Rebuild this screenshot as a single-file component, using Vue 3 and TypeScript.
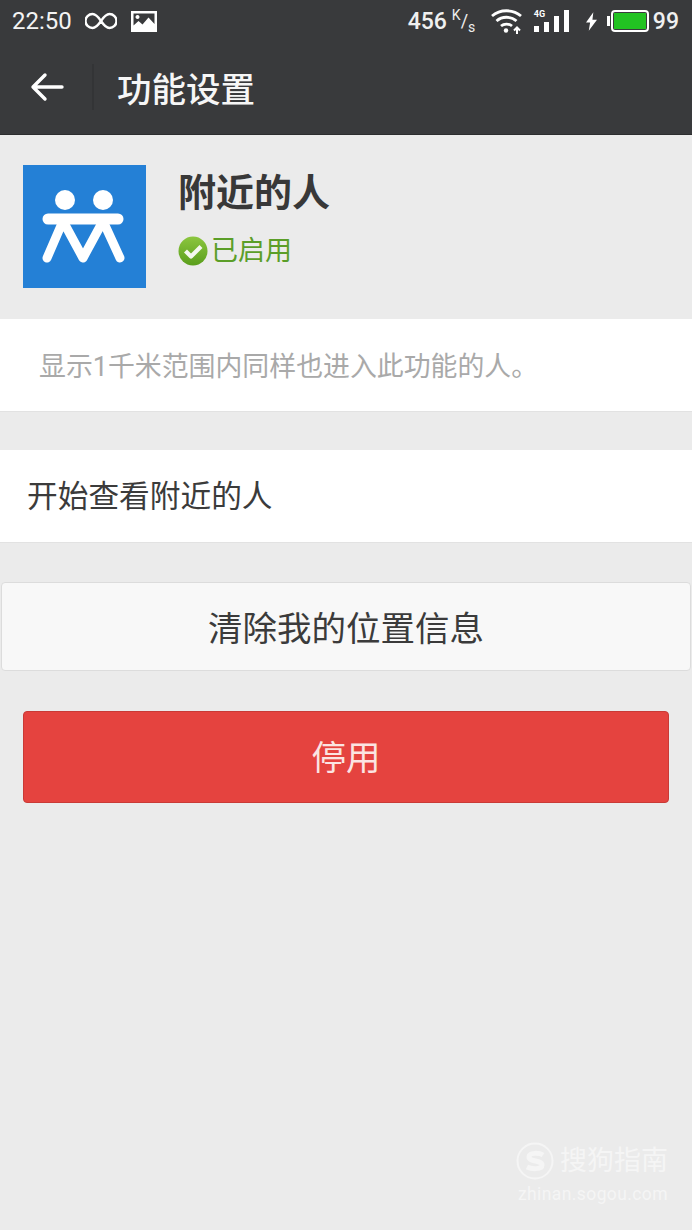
<script setup lang="ts">
const title = '功能设置'
</script>

<template>
  <div class="screen">
    <header class="head">
      <div class="status">
        <div class="status-left">
          <span class="time">22:50</span>
          <svg class="inf" width="32" height="18" viewBox="0 0 32 18" fill="none" stroke="#fff" stroke-width="2.400">
            <path d="M16 9c-3-4.500-5-7-8.500-7a7 7 0 0 0 0 14c3.500 0 5.500-2.500 8.500-7s5-7 8.500-7a7 7 0 0 1 0 14c-3.500 0-5.500-2.500-8.500-7z" />
          </svg>
          <svg class="pic" width="26" height="21" viewBox="0 0 26 21">
            <path fill="#fff" fill-rule="evenodd" d="M0 0h26v21H0zM2.500 2.500v12l5-4.500 4 3.500 6-7 6 6.500V2.500zM6.500 4a2 2 0 1 0 .01 0z" />
          </svg>
        </div>
        <div class="status-right">
          <span class="speed">456</span>
          <span class="unit"><sup>K</sup>/<sub>s</sub></span>
          <svg class="wifi" width="31" height="26" viewBox="0 0 31 26" fill="none" stroke="#fff" stroke-width="2.800">
            <path d="M1 8c8-7 21-7 29 0M5.500 13c5.500-5 14.500-5 20 0M10 18c3-2.600 8-2.600 11 0" />
            <circle cx="15" cy="22.500" r="2.200" fill="#fff" stroke="none" />
            <path d="M26 26v-6M23 22.500l3-3 3 3" stroke-width="2" />
          </svg>
          <div class="signal">
            <span class="four-g">4G</span>
            <i class="b1"></i><i class="b2"></i><i class="b3"></i><i class="b4"></i>
          </div>
          <svg class="bolt" width="11" height="19" viewBox="0 0 12 20">
            <path fill="#fff" d="M8 0 0 11h4.500L3 20l9-12H7z" />
          </svg>
          <div class="battery"><span class="level"></span></div>
          <span class="pct">99</span>
        </div>
      </div>
      <div class="toolbar">
        <svg class="back" width="34" height="30" viewBox="0 0 34 30" fill="none" stroke="#fff" stroke-width="3.400" stroke-linecap="round" stroke-linejoin="round">
          <path d="M32 15H3M15 3 3 15l12 12" />
        </svg>
        <span class="divider"></span>
        <h1 class="title">{{ title }}</h1>
      </div>
    </header>

    <section class="info">
      <div class="logo">
        <svg width="123" height="123" viewBox="0 0 123 123">
          <circle cx="42" cy="35" r="10" fill="#fff" />
          <circle cx="80" cy="35" r="10" fill="#fff" />
          <g fill="none" stroke="#fff" stroke-linecap="round" stroke-linejoin="round">
            <path d="M25 54h70" stroke-width="11" />
            <path d="M40 56 24 93M40 56l20 37 20-37M80 56l17 37" stroke-width="9" />
          </g>
        </svg>
      </div>
      <div class="info-text">
        <h2 class="name">附近的人</h2>
        <div class="state">
          <svg width="30" height="30" viewBox="0 0 30 30">
            <defs>
              <linearGradient id="ok" x1="0" y1="0" x2="0" y2="1">
                <stop offset="0" stop-color="#8cc63f" />
                <stop offset="1" stop-color="#5a9e1c" />
              </linearGradient>
            </defs>
            <circle cx="15" cy="15" r="14.500" fill="url(#ok)" />
            <path d="M7.500 15l5.500 5.500 10-10" fill="none" stroke="#f4f8ee" stroke-width="4.200" stroke-linejoin="round" />
          </svg>
          <span>已启用</span>
        </div>
      </div>
    </section>

    <div class="desc">显示1千米范围内同样也进入此功能的人。</div>
    <div class="row">开始查看附近的人</div>
    <button type="button" class="btn-clear">清除我的位置信息</button>
    <button type="button" class="btn-stop">停用</button>

    <div class="mark">
      <div class="mark-top">
        <svg width="38" height="38" viewBox="0 0 38 38" fill="none" stroke="#f5f5f5">
          <circle cx="19" cy="19" r="17.500" stroke-width="2" />
          <path d="M27 13c-3-2-14-3-14 2s13 3 13 8-11 4-15 2" stroke-width="5" />
        </svg>
        <span class="mark-name">搜狗指南</span>
      </div>
      <div class="mark-url">zhinan.sogou.com</div>
    </div>
  </div>
</template>

<style scoped>
.screen {
  position: relative;
  width: 692px;
  height: 1230px;
  overflow: hidden;
  background: #ebebeb;
  font-family: "Roboto", "Noto Sans CJK SC", sans-serif;
}

.head {
  height: 135px;
  background: #393a3c;
  border-bottom: 1px solid #2c2d2e;
  box-sizing: border-box;
  color: #fff;
}

.status {
  display: flex;
  justify-content: space-between;
  align-items: center;
  height: 42px;
  padding: 0 13px 0 12px;
}

.status-left,
.status-right {
  display: flex;
  align-items: center;
}

.time {
  font-size: 24px;
  color: #f4f4f4;
}

.inf {
  margin-left: 13px;
}

.pic {
  margin-left: 14px;
}

.speed {
  font-size: 23px;
  font-weight: 500;
  color: #f0f0f0;
}

.unit {
  margin-left: 5px;
  width: 25px;
  font-size: 18px;
  line-height: 20px;
  color: #eee;
}

.unit sup,
.unit sub {
  font-size: 14px;
  line-height: 0;
}

.wifi {
  margin-left: 14px;
}

.signal {
  position: relative;
  display: flex;
  align-items: flex-end;
  gap: 5px;
  height: 22px;
  margin-left: 12px;
}

.signal i {
  display: block;
  width: 5px;
  background: #fff;
}

.b1 { height: 6px; }
.b2 { height: 10px; }
.b3 { height: 16px; }
.b4 { height: 22px; }

.four-g {
  position: absolute;
  left: 0;
  top: -1px;
  font-size: 9px;
  line-height: 10px;
  font-weight: 700;
}

.bolt {
  margin-left: 17px;
}

.battery {
  position: relative;
  width: 38px;
  height: 22px;
  margin-left: 14px;
  padding: 1px;
  border: 2px solid #fff;
  border-radius: 4px;
  box-sizing: border-box;
}

.battery::before {
  content: "";
  position: absolute;
  left: -6px;
  top: 4px;
  width: 3px;
  height: 10px;
  background: #fff;
}

.level {
  display: block;
  height: 100%;
  background: #22c222;
}

.pct {
  margin-left: 4px;
  font-size: 23px;
  font-weight: 500;
  color: #f0f0f0;
}

.toolbar {
  display: flex;
  align-items: center;
  height: 92px;
  padding: 0 0 2px 30px;
  box-sizing: border-box;
}

.back {
  flex: none;
}

.divider {
  width: 2px;
  height: 46px;
  margin-left: 28px;
  background: #333436;
}

.title {
  margin: 0 0 0 23px;
  font-size: 34.500px;
  font-weight: 500;
  color: #f6f6f6;
}

.info {
  display: flex;
  align-items: flex-start;
  padding: 30px 23px 31px;
}

.logo {
  width: 123px;
  height: 123px;
  background: #2480d6;
}

.logo svg {
  display: block;
}

.info-text {
  margin-left: 32px;
}

.name {
  margin: 3px 0 0;
  font-size: 38px;
  line-height: 50px;
  font-weight: 700;
  color: #383838;
}

.state {
  display: flex;
  align-items: center;
  margin-top: 14px;
  font-size: 27px;
  line-height: 38px;
  color: #5b9e28;
}

.state svg {
  margin-right: 3px;
}

.desc {
  height: 93px;
  padding-left: 39px;
  background: #fff;
  border-bottom: 1px solid #e2e2e2;
  box-sizing: border-box;
  font-size: 26.900px;
  line-height: 96px;
  color: #a9a9a9;
}

.row {
  height: 93px;
  margin-top: 38px;
  padding-left: 27px;
  background: #fff;
  border-bottom: 1px solid #e2e2e2;
  box-sizing: border-box;
  font-size: 30.700px;
  line-height: 94px;
  color: #3b3b3b;
}

.btn-clear,
.btn-stop {
  display: block;
  font-family: inherit;
  border-radius: 4px;
  box-sizing: border-box;
}

.btn-clear {
  width: 690px;
  height: 89px;
  margin: 39px 1px 0;
  padding: 0 0 2px;
  background: #f8f8f8;
  border: 1px solid #dcdcdc;
  font-size: 34.500px;
  color: #3b3b3b;
}

.btn-stop {
  width: 646px;
  height: 92px;
  margin: 40px 23px 0;
  padding: 0 0 4px;
  background: #e5433f;
  border: 1px solid #c93a36;
  font-size: 34.500px;
  color: #fbe4e2;
}

.mark {
  position: absolute;
  right: 24px;
  top: 1142px;
  color: #f5f5f5;
}

.mark-top {
  display: flex;
  align-items: center;
  gap: 6px;
}

.mark-name {
  font-size: 27px;
  line-height: 38px;
}

.mark-url {
  margin-top: 2px;
  font-size: 17.500px;
  line-height: 24px;
  letter-spacing: 0.400px;
  text-align: right;
}
</style>
